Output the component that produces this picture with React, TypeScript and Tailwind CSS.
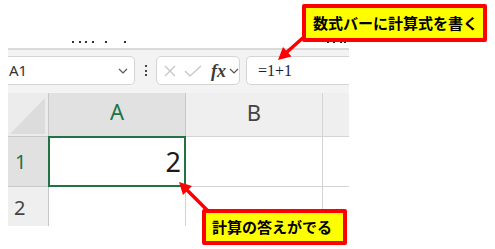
import React from 'react';

const GREEN = '#217346';

const Chevron = ({ className }: { className?: string }) => (
    <svg className={className} width="10" height="6" viewBox="0 0 10 6" fill="none">
        <path d="M1 1l4 4 4-4" stroke="#555" strokeWidth="1.2" />
    </svg>
);

const Toolbar: React.FC = () => (
    <div className="h-[45px] border-t-2 border-[#dadada] bg-[#f3f3f3] flex items-start pt-[6px]">
        <div className="w-[127px] h-[29px] bg-white border border-l-0 border-[#d4d4d4] rounded-r-[5px] flex items-center justify-between pl-px pr-[6px]">
            <span className="text-[15px] text-[#333] leading-none">A1</span>
            <Chevron />
        </div>
        <div className="w-[21px] h-[29px] flex flex-col items-center justify-center gap-[2.5px]">
            {[0, 1, 2].map(i => <span key={i} className="w-[2px] h-[2px] bg-[#444]" />)}
        </div>
        <div className="w-[84px] h-[29px] bg-white border border-[#d4d4d4] rounded-[5px] flex items-center pl-[6px]">
            <svg width="12" height="12" viewBox="0 0 12 12" className="ml-px">
                <path d="M1 1l10 10M11 1L1 11" stroke="#c4c4c4" strokeWidth="1.2" />
            </svg>
            <svg width="18" height="12" viewBox="0 0 18 12" className="ml-[8px]">
                <path d="M1 6l5 5L17 1" stroke="#c4c4c4" strokeWidth="1.2" fill="none" />
            </svg>
            <span className="ml-[9px] text-[18px] italic font-bold text-[#3a3a3a] font-['Liberation_Serif',serif] leading-none">fx</span>
            <Chevron className="ml-[3px]" />
        </div>
        <div className="ml-[6px] flex-1 h-[29px] bg-white border border-r-0 border-[#d4d4d4] rounded-l-[5px] flex items-center pl-[11px]">
            <span className="text-[16px] text-[#1c1c48] font-['Liberation_Serif',serif] leading-none">=1+1</span>
        </div>
    </div>
);

const Grid: React.FC = () => (
    <div className="bg-white">
        <div className="flex h-[44px]">
            <div className="w-[41px] bg-[#ececec] border-r border-b border-[#c8c8c8] flex items-end justify-end pr-[3px] pb-[2px]">
                <svg width="35" height="36" viewBox="0 0 35 36">
                    <path d="M35 0V36H0z" fill="#dcdcdc" />
                </svg>
            </div>
            <div className="w-[137px] bg-[#e1e1e1] border-r border-b border-[#c8c8c8] flex justify-center pt-[2px]">
                <span className="text-[22px]" style={{ color: GREEN }}>A</span>
            </div>
            <div className="w-[137px] bg-[#efefef] border-r border-b border-[#d4d4d4] flex justify-center pt-[3px]">
                <span className="text-[22px] text-[#444]">B</span>
            </div>
            <div className="flex-1 bg-[#efefef] border-b border-[#d4d4d4]" />
        </div>
        <div className="flex h-[50px]">
            <div className="w-[41px] bg-[#e1e1e1] border-r border-b border-[#c8c8c8] flex items-center pl-[7px]">
                <span className="text-[20px]" style={{ color: GREEN }}>1</span>
            </div>
            <div className="w-[137px] relative border-r border-b border-[#d4d4d4] flex items-center justify-end pr-[4px]">
                <span className="text-[27px] text-[#1a1a1a] leading-none">2</span>
                <div className="absolute -left-px -top-px -right-px -bottom-px border-2" style={{ borderColor: GREEN }} />
            </div>
            <div className="w-[137px] border-r border-b border-[#d4d4d4]" />
            <div className="flex-1 border-b border-[#d4d4d4]" />
        </div>
        <div className="flex h-[39px]">
            <div className="w-[41px] bg-[#efefef] border-r border-[#c8c8c8] flex items-start pt-[8px] pl-[6px]">
                <span className="text-[20px] text-[#444] leading-tight">2</span>
            </div>
            <div className="w-[137px] border-r border-[#d4d4d4]" />
            <div className="w-[137px] border-r border-[#d4d4d4]" />
            <div className="flex-1" />
        </div>
    </div>
);

const Callout = ({ text, className }: { text: string; className: string }) => (
    <div className={`absolute bg-[#ffff00] border-[4px] border-[#ff0000] rounded-[2px] flex items-center whitespace-nowrap font-['Noto_Sans_CJK_JP',sans-serif] font-bold text-[15px] text-black ${className}`}>
        {text}
    </div>
);

export default function App() {
    return (
        <div className="relative w-[495px] h-[249px] bg-white overflow-hidden font-['Noto_Sans',sans-serif]">
            <div className="ml-[8px] w-[341px]">
                <div className="h-[48px] flex items-end pb-[5px]">
                    {[64, 71, 77, 84, 97, 116].map(x => (
                        <span key={x} className="absolute w-[2px] h-[2px] bg-[#333]" style={{ left: x + 8, top: 41 }} />
                    ))}
                    {[327, 333, 340, 344].map(x => (
                        <span key={x} className="absolute w-[2px] h-[4px] bg-[#222]" style={{ left: x, top: 39 }} />
                    ))}
                </div>
                <Toolbar />
                <Grid />
            </div>

            <svg className="absolute inset-0" width="495" height="249" viewBox="0 0 495 249">
                <line x1="305" y1="36" x2="287" y2="52" stroke="#ff0000" strokeWidth="3.5" />
                <polygon points="278,60 291.5,56.5 283,47" fill="#ff0000" />
                <line x1="210" y1="213" x2="187" y2="190" stroke="#ff0000" strokeWidth="3.5" />
                <polygon points="179,182 192,186 183,195" fill="#ff0000" />
            </svg>

            <Callout text="数式バーに計算式を書く" className="left-[302px] top-[4px] w-[185px] h-[38px] pl-[7px]" />
            <Callout text="計算の答えがでる" className="left-[202px] top-[209px] w-[145px] h-[36px] pl-[6px]" />
        </div>
    );
}
